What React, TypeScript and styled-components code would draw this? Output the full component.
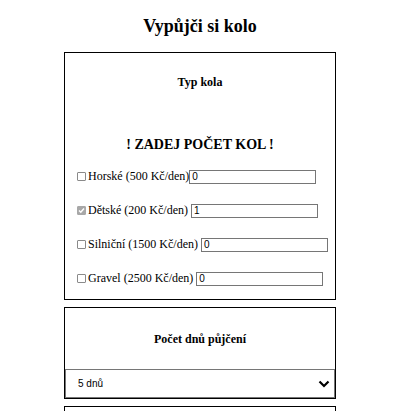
import React from "react";
import styled, { createGlobalStyle } from "styled-components";

const Global = createGlobalStyle`
  html, body { margin: 0; padding: 0; background: #fff; }
  body { font-family: "Liberation Serif", "Times New Roman", serif; color: #000; }
`;

const Page = styled.div`
  width: 272px;
  margin: 0 0 0 64px;
  display: flex;
  flex-direction: column;
  align-items: stretch;
`;

const Title = styled.h1`
  margin: 16px 0 0;
  height: 36px;
  font-size: 18px;
  line-height: 20px;
  font-weight: bold;
  text-align: center;
`;

const Card = styled.section<{ $pb?: number }>`
  border: 1px solid #000;
  display: flex;
  flex-direction: column;
  padding-bottom: ${(p) => p.$pb ?? 0}px;
  margin-bottom: 7px;
`;

const CardHeading = styled.h3<{ $mt: number; $mb: number }>`
  margin: ${(p) => p.$mt}px 0 ${(p) => p.$mb}px;
  font-size: 12px;
  line-height: 16px;
  font-weight: bold;
  text-align: center;
`;

const Warning = styled.h2`
  margin: 0 0 13px;
  font-size: 14px;
  line-height: 20px;
  font-weight: bold;
  text-align: center;
`;

const Rows = styled.div`
  display: flex;
  flex-direction: column;
  gap: 17px;
  padding-left: 12px;
`;

const Row = styled.label`
  display: flex;
  align-items: center;
  height: 17px;
  font-size: 12px;
  white-space: pre;
`;

const Box = styled.span<{ $checked?: boolean }>`
  width: 9px;
  height: 9px;
  box-sizing: border-box;
  margin-right: 2px;
  border: 1px solid ${(p) => (p.$checked ? "#a8a8a8" : "#8a8a8a")};
  background: ${(p) => (p.$checked ? "#a8a8a8" : "#fff")};
  border-radius: 1px;
  display: flex;
  align-items: center;
  justify-content: center;
`;

const TextInput = styled.input`
  width: 127px;
  height: 14px;
  box-sizing: border-box;
  border: 1px solid #767676;
  padding: 0 2px;
  font-family: "Liberation Sans", Arial, sans-serif;
  font-size: 10px;
  color: #000;
  outline: none;
  margin: 0;
`;

const SelectBox = styled.div`
  height: 29px;
  box-sizing: border-box;
  border: 1px solid #767676;
  display: flex;
  align-items: center;
  justify-content: space-between;
  padding: 0 4px 0 12px;
  font-family: "Liberation Sans", Arial, sans-serif;
  font-size: 10px;
`;

const Chevron = () => (
  <svg width="12" height="8" viewBox="0 0 12 8">
    <path d="M1.5 1.5 L6 6 L10.5 1.5" fill="none" stroke="#000" strokeWidth="2.2" />
  </svg>
);

const Check = () => (
  <svg width="7" height="7" viewBox="0 0 7 7">
    <path d="M1 3.6 L2.8 5.3 L6 1.5" fill="none" stroke="#fff" strokeWidth="1.4" />
  </svg>
);

const bikes = [
  { label: "Horské (500 Kč/den)", sep: "", value: "0", checked: false },
  { label: "Dětské (200 Kč/den)", sep: " ", value: "1", checked: true },
  { label: "Silniční (1500 Kč/den)", sep: " ", value: "0", checked: false },
  { label: "Gravel (2500 Kč/den)", sep: " ", value: "0", checked: false },
];

export default function App() {
  return (
    <>
      <Global />
      <Page>
        <Title>Vypůjči si kolo</Title>
        <Card $pb={12}>
          <CardHeading $mt={21} $mb={45}>Typ kola</CardHeading>
          <Warning>! ZADEJ POČET KOL !</Warning>
          <Rows>
            {bikes.map((b) => (
              <Row key={b.label}>
                <Box $checked={b.checked}>{b.checked && <Check />}</Box>
                {b.label + b.sep}
                <TextInput defaultValue={b.value} />
              </Row>
            ))}
          </Rows>
        </Card>
        <Card>
          <CardHeading $mt={23} $mb={22}>Počet dnů půjčení</CardHeading>
          <SelectBox>
            <span>5 dnů</span>
            <Chevron />
          </SelectBox>
        </Card>
        <Card $pb={40} />
      </Page>
    </>
  );
}
